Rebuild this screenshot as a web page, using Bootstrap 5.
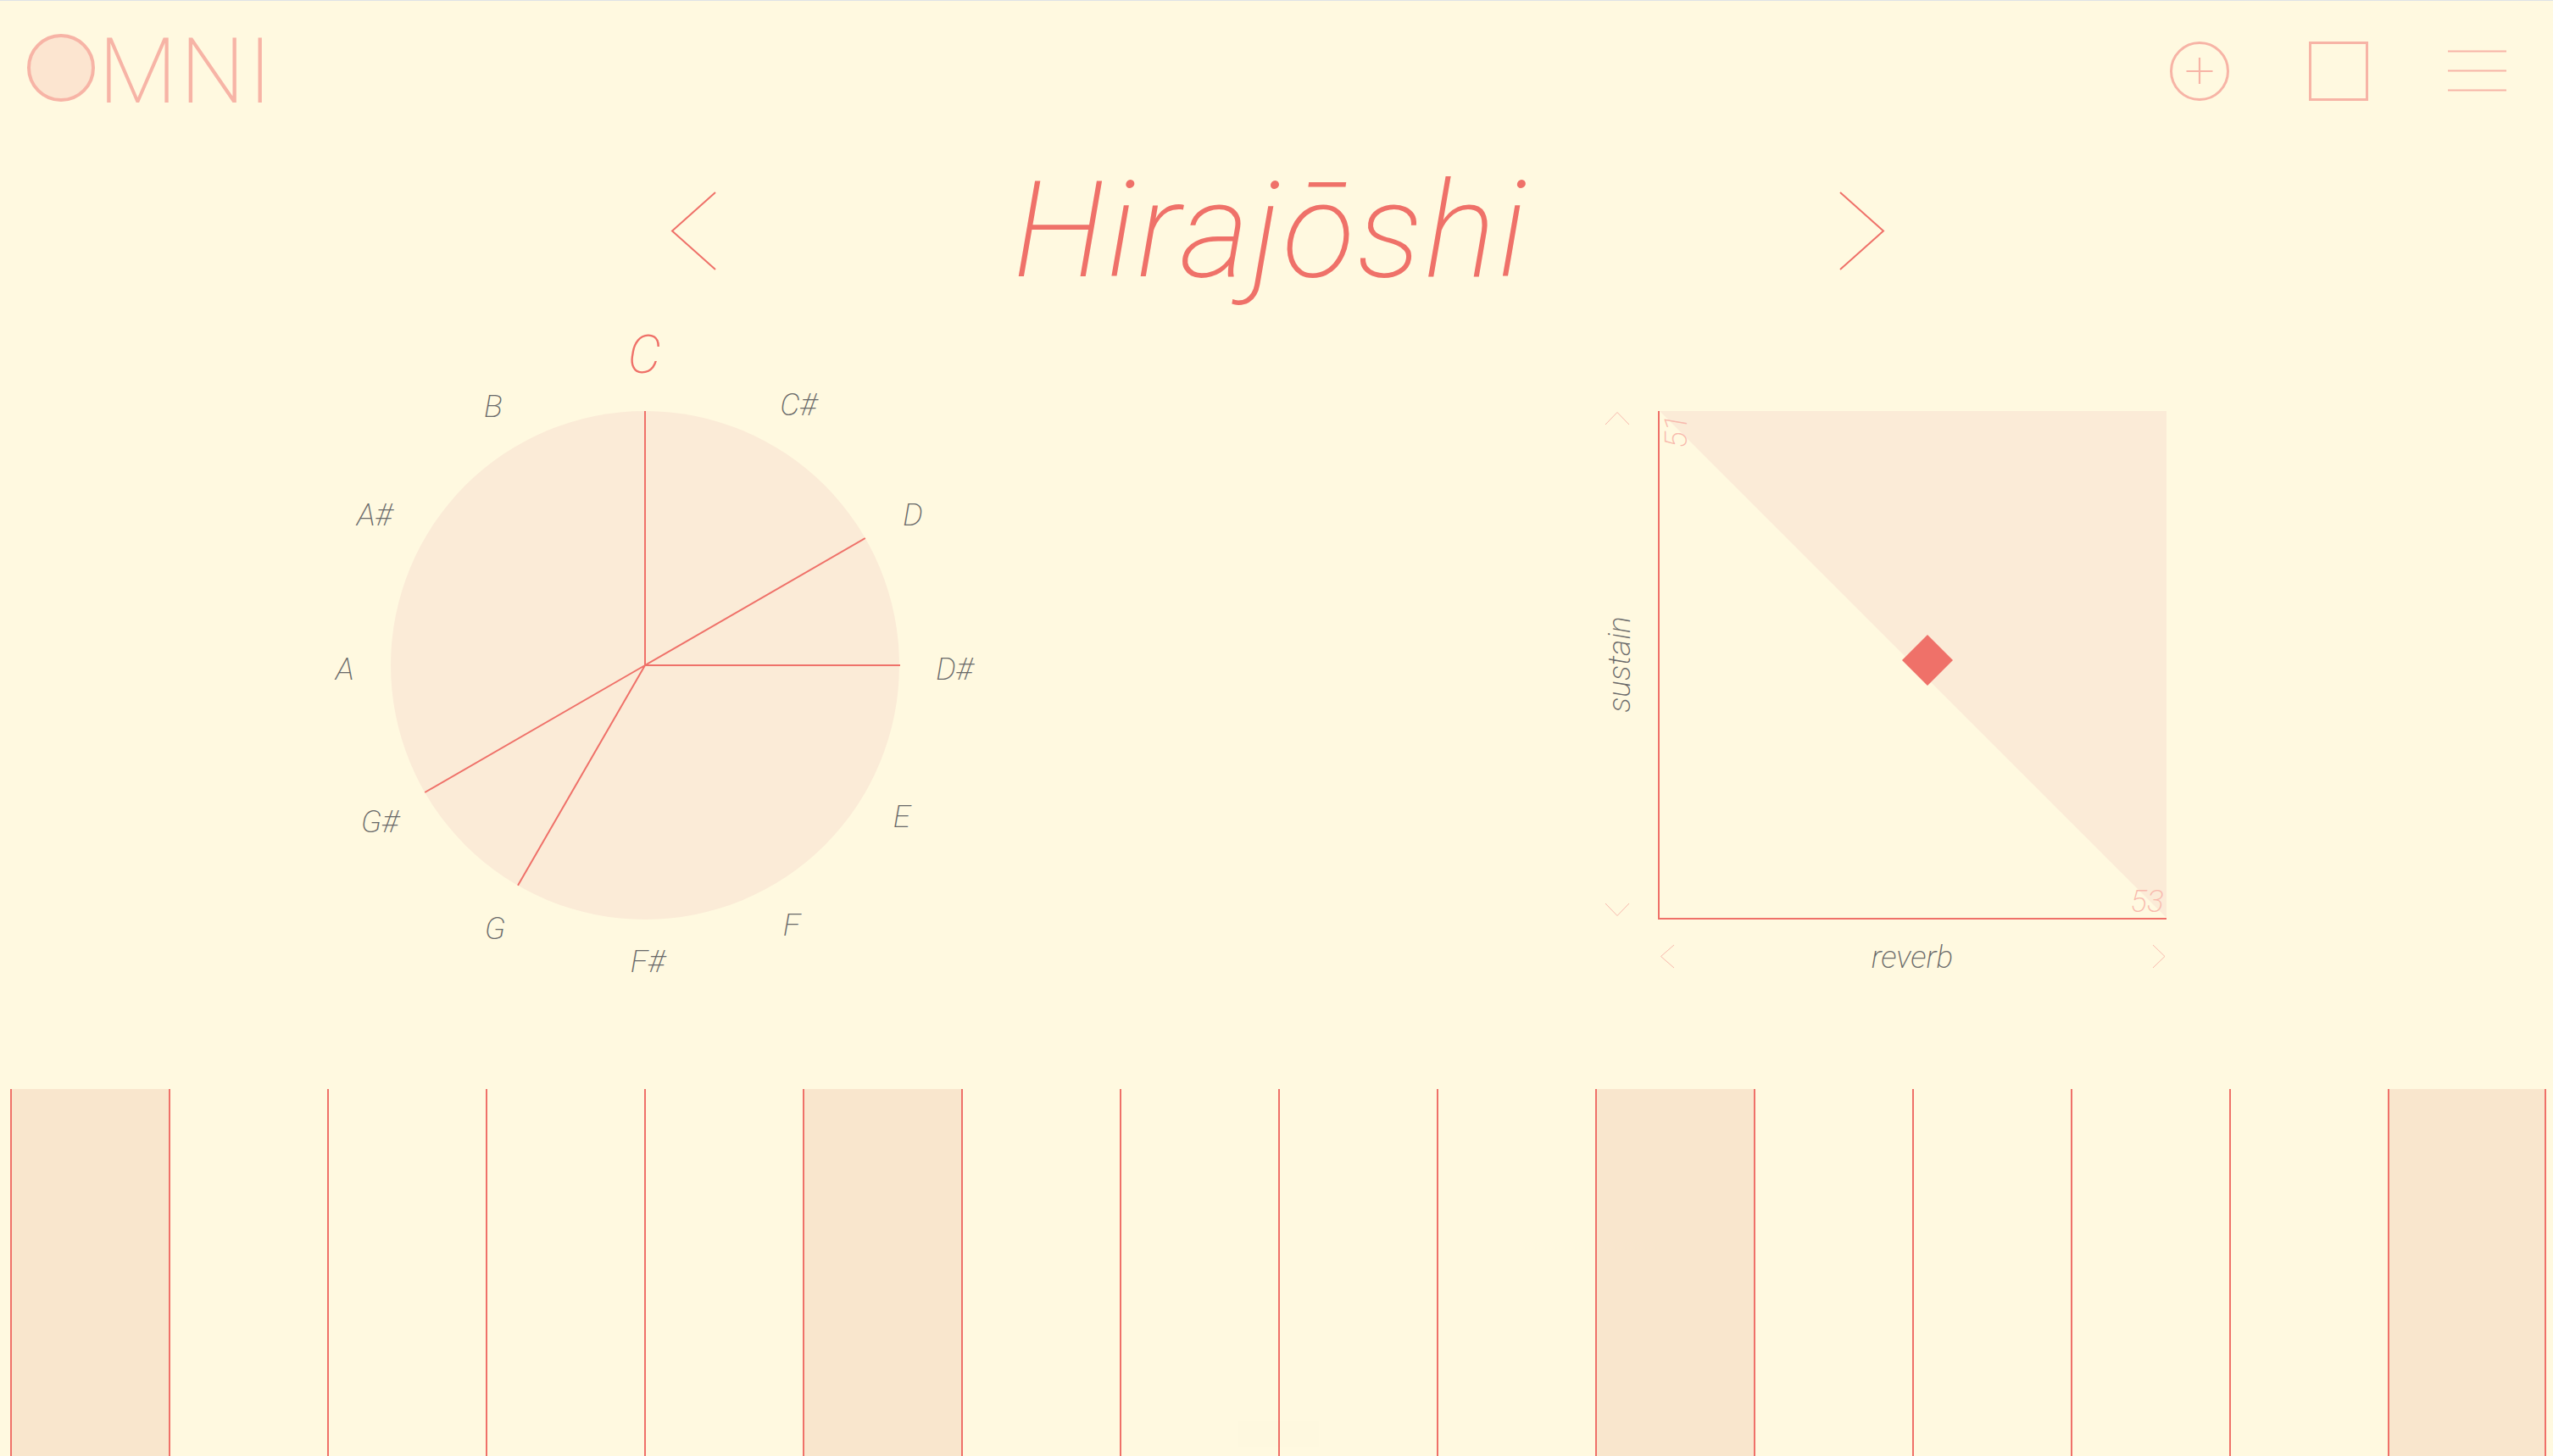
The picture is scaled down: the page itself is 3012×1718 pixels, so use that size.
<!doctype html>
<html lang="en"><head><meta charset="utf-8"><title>Omni</title>
<link href="https://cdn.jsdelivr.net/npm/bootstrap@5.3.0/dist/css/bootstrap.min.css" rel="stylesheet">
<style>
html,body{height:100%;margin:0}
body{background:#fff9e0;overflow:hidden;font-family:Roboto,"Liberation Sans",sans-serif;font-style:italic;font-weight:170;color:#686868;border-top:1px solid #dee2e6}
.app-shell{height:1717px;display:flex;flex-direction:column}
.top-bar{height:179px;padding:39px 55px 0 32px;display:flex;justify-content:space-between;align-items:flex-start}
.logo-wrap{display:flex;align-items:center;height:80px}
.logo-disc{width:80px;height:80px;border-radius:50%;background:#fce5d0;border:4px solid #f7b4a6;flex:none}
.logo-text{font-family:Roboto,sans-serif;font-style:normal;font-weight:200;font-size:108px;line-height:80px;color:#f7b4a6;margin:8px 0 0 4px;letter-spacing:3.500px}
.top-icons{display:flex;align-items:flex-start;gap:94px;padding-top:9px}
.top-icons svg{display:block}
.title-row{height:185px;display:flex;justify-content:center;align-items:center;padding-left:3px}
.title-text{width:1325px;margin:0;padding-right:17px;text-align:center;font-size:158px;line-height:185px;font-weight:170;font-style:italic;letter-spacing:2.800px;color:#ef7169}
.stage{height:920px;padding:40px 0 0 381px;display:flex;align-items:flex-start}
.wheel-box{position:relative;width:760px;height:760px;flex:none}
.pad-box{position:relative;width:700px;height:700px;flex:none;margin:60px 0 0 739px}
.wheel-box svg,.pad-box svg{position:absolute;left:0;top:0}
.note-tag{position:absolute;font-size:37px;line-height:1;transform:translate(-50%,-50%);white-space:nowrap}
.note-tag.is-root{font-size:62px;color:#ef7169}
.note-tag.is-limit{color:#f8b9ad}
.note-tag.is-turned{transform:translate(-50%,-50%) rotate(-90deg)}
.keys{position:relative;display:flex;padding-left:12px;height:433px}
.key-cell{flex:0 0 187px;border-left:2px solid #ef7169}
.key-cell.is-on{background:#f9e6cd}
.key-cell:last-of-type{border-right:2px solid #ef7169}
.ghost-chip{position:absolute;left:1460px;top:392px;width:96px;height:30px;background:rgba(0,0,0,.005)}
</style></head><body>
<div class="app-shell">
<header class="top-bar">
 <div class="logo-wrap"><div class="logo-disc"></div><div class="logo-text">MNI</div></div>
 <div class="top-icons">
  <svg width="70" height="70" viewBox="0 0 70 70"><circle cx="35" cy="35" r="33.500" fill="none" stroke="#f7b4a6" stroke-width="3"/><path d="M35 19V50M19.500 35H50.500" stroke="#f7b4a6" stroke-width="2.200" fill="none"/></svg>
  <svg width="70" height="70" viewBox="0 0 70 70"><rect x="1.500" y="1.500" width="67" height="67" fill="none" stroke="#f7b4a6" stroke-width="3"/></svg>
  <svg width="69" height="70" viewBox="0 0 69 70"><path d="M0 11.500H69M0 34.500H69M0 57.500H69" stroke="#f7b4a6" stroke-width="2.200" fill="none"/></svg>
 </div>
</header>
<div class="title-row">
 <svg width="54" height="94" viewBox="0 0 54 94"><path d="M53 1L2 46.500L53 92" fill="none" stroke="#ef7169" stroke-width="2"/></svg>
 <h1 class="title-text">Hirajōshi</h1>
 <svg width="54" height="94" viewBox="0 0 54 94"><path d="M1 1L52 46.500L1 92" fill="none" stroke="#ef7169" stroke-width="2"/></svg>
</div>
<main class="stage">
 <div class="wheel-box">
  <svg width="760" height="760" viewBox="0 0 760 760"><circle cx="380" cy="380" r="300" fill="#fbebd7"/><path d="M380 80V380H681M380 380L639.800 230M380 380L230 639.800M380 380L120.200 530" fill="none" stroke="#ef7169" stroke-width="2"/></svg>
  <span class="note-tag is-root" style="left:379px;top:14px">C</span>
  <span class="note-tag" style="left:561px;top:72px">C#</span>
  <span class="note-tag" style="left:696px;top:202px">D</span>
  <span class="note-tag" style="left:745px;top:384px">D#</span>
  <span class="note-tag" style="left:683px;top:558px">E</span>
  <span class="note-tag" style="left:553px;top:686px">F</span>
  <span class="note-tag" style="left:383px;top:729px">F#</span>
  <span class="note-tag" style="left:203px;top:690px">G</span>
  <span class="note-tag" style="left:67px;top:564px">G#</span>
  <span class="note-tag" style="left:26px;top:384px">A</span>
  <span class="note-tag" style="left:61px;top:202px">A#</span>
  <span class="note-tag" style="left:201px;top:74px">B</span>
 </div>
 <div class="pad-box">
  <svg width="700" height="700" viewBox="0 0 700 700">
   <polygon points="78,20 676,20 676,618" fill="#fbebd7"/>
   <path d="M77 20V619H676" fill="none" stroke="#ef7169" stroke-width="2"/>
   <polygon points="394,284 424,314 394,344 364,314" fill="#ef7169"/>
   <path d="M14 36L28 21.500L42 36M14 601L28 615.500L42 601M95 650L79.500 663.500L95 677M660 650L674 663.500L660 677" fill="none" stroke="#f8b9ad" stroke-width="1"/>
  </svg>
  <span class="note-tag is-limit is-turned" style="left:97px;top:44px">51</span>
  <span class="note-tag is-limit" style="left:653px;top:598px">53</span>
  <span class="note-tag is-turned" style="left:30px;top:319px">sustain</span>
  <span class="note-tag" style="left:376px;top:664px">reverb</span>
 </div>
</main>
<section class="keys">
 <div class="key-cell is-on"></div><div class="key-cell"></div><div class="key-cell"></div><div class="key-cell"></div><div class="key-cell"></div>
 <div class="key-cell is-on"></div><div class="key-cell"></div><div class="key-cell"></div><div class="key-cell"></div><div class="key-cell"></div>
 <div class="key-cell is-on"></div><div class="key-cell"></div><div class="key-cell"></div><div class="key-cell"></div><div class="key-cell"></div>
 <div class="key-cell is-on"></div>
 <span class="ghost-chip"></span>
</section>
</div>
</body></html>
